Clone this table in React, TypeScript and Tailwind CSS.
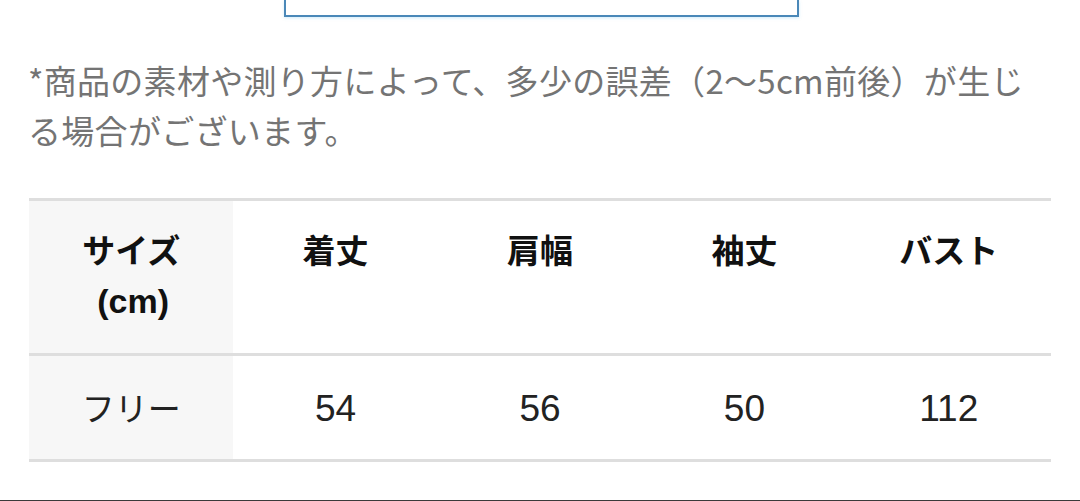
const headers = ['着丈', '肩幅', '袖丈', 'バスト'];
const values = ['54', '56', '50', '112'];

export default function App() {
  return (
    <div
      className="w-[1080px] h-[501px] bg-white flex flex-col overflow-hidden"
      style={{ fontFamily: '"Noto Sans CJK JP", "Noto Sans", sans-serif' }}
    >
      {/* button edge cut off at the top */}
      <div className="flex justify-center">
        <div className="ml-[2px] w-[515px] h-[17px] border-2 border-t-0 border-[#4a88b8] shadow-[0_1px_3px_rgba(120,200,240,0.35)]" />
      </div>

      <p className="mt-[38px] px-[28px] text-[33px] leading-[50px] text-[#747474] tracking-[0.3px]">
        *商品の素材や測り方によって、多少の誤差（2〜5cm前後）が生じ
        <br />
        る場合がございます。
      </p>

      <div className="mt-[43px] ml-[29px] w-[1022px] border-t-[3px] border-[#dedede]">
        <div className="grid grid-cols-5 border-b-[3px] border-[#dedede]">
          <div className="bg-[#f7f7f7] pt-[23px] pb-[27px] text-center text-[33px] leading-[50px] font-bold text-[#111]">
            サイズ
            <br />
            <span className="pl-[4px] text-[34px]" style={{ fontFamily: '"Liberation Sans", Arial, sans-serif' }}>
              (cm)
            </span>
          </div>
          {headers.map((h) => (
            <div key={h} className="pt-[23px] text-center text-[33px] leading-[50px] font-bold text-[#111]">
              {h}
            </div>
          ))}
        </div>
        <div className="grid grid-cols-5 border-b-[3px] border-[#dedede]">
          <div className="bg-[#f7f7f7] h-[103px] flex items-center justify-center text-[33px] text-[#222]">
            フリー
          </div>
          {values.map((v, i) => (
            <div
              key={i}
              className="h-[103px] flex items-center justify-center pt-[2px] text-[37px] text-[#222]"
              style={{ fontFamily: '"Liberation Sans", Arial, sans-serif' }}
            >
              {v}
            </div>
          ))}
        </div>
      </div>

      <div className="mt-auto h-px bg-[#3a3a3a]" />
    </div>
  );
}
